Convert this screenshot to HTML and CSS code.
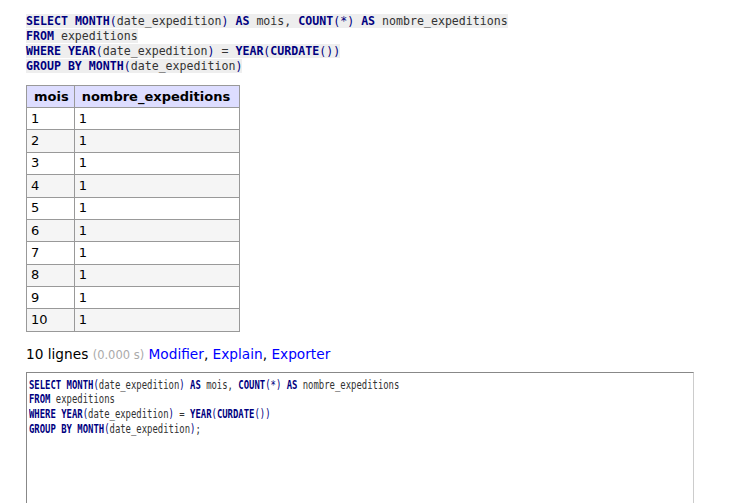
FILE: index.html
```html
<!DOCTYPE html>
<html lang="fr">
<head>
<meta charset="utf-8">
<title>SQL</title>
<link rel="stylesheet" href="styles.css">
</head>
<body>
<div class="content">
  <p class="sql"><code class="code"><b class="kw">SELECT</b> <b class="kw">MONTH</b><span class="op">(</span>date_expedition<span class="op">)</span> <b class="kw">AS</b> mois, <b class="kw">COUNT</b><span class="op">(*)</span> <b class="kw">AS</b> nombre_expeditions<br><b class="kw">FROM</b> expeditions<br><b class="kw">WHERE</b> <b class="kw">YEAR</b><span class="op">(</span>date_expedition<span class="op">)</span> = <b class="kw">YEAR</b><span class="op">(</span><b class="kw">CURDATE</b><span class="op">())</span><br><b class="kw">GROUP BY</b> <b class="kw">MONTH</b><span class="op">(</span>date_expedition<span class="op">)</span></code></p>

  <table class="result">
    <thead>
      <tr><th>mois</th><th>nombre_expeditions</th></tr>
    </thead>
    <tbody>
      <tr><td>1</td><td>1</td></tr>
      <tr><td>2</td><td>1</td></tr>
      <tr><td>3</td><td>1</td></tr>
      <tr><td>4</td><td>1</td></tr>
      <tr><td>5</td><td>1</td></tr>
      <tr><td>6</td><td>1</td></tr>
      <tr><td>7</td><td>1</td></tr>
      <tr><td>8</td><td>1</td></tr>
      <tr><td>9</td><td>1</td></tr>
      <tr><td>10</td><td>1</td></tr>
    </tbody>
  </table>

  <p class="stats">10 lignes <span class="time">(0.000 s)</span> <a href="#">Modifier</a>, <a href="#">Explain</a>, <a href="#">Exporter</a></p>

  <div class="editor"><div class="editor-text"><b class="kw">SELECT</b> <b class="kw">MONTH</b><span class="op">(</span>date_expedition<span class="op">)</span> <b class="kw">AS</b> mois, <b class="kw">COUNT</b><span class="op">(*)</span> <b class="kw">AS</b> nombre_expeditions<br><b class="kw">FROM</b> expeditions<br><b class="kw">WHERE</b> <b class="kw">YEAR</b><span class="op">(</span>date_expedition<span class="op">)</span> = <b class="kw">YEAR</b><span class="op">(</span><b class="kw">CURDATE</b><span class="op">())</span><br><b class="kw">GROUP BY</b> <b class="kw">MONTH</b><span class="op">(</span>date_expedition<span class="op">)</span>;</div></div>
</div>
</body>
</html>
```

FILE: styles.css
```css
html, body {
  margin: 0;
  padding: 0;
  background: #fff;
}

body {
  font-family: "DejaVu Sans", Verdana, sans-serif;
  font-size: 13px;
  color: #000;
}

.content {
  padding: 14px 0 0 26px;
}

.sql {
  margin: 0 0 11px 0;
  font-family: "DejaVu Sans Mono", Consolas, monospace;
  font-size: 11.6px;
  line-height: 15px;
}

.code {
  font-family: "DejaVu Sans Mono", Consolas, monospace;
  font-size: 11.6px;
  line-height: 15px;
  background: #eee;
  color: #333;
}

.kw {
  color: #000080;
  font-weight: bold;
}

.op {
  color: #000080;
}

.result {
  border-collapse: collapse;
  border: 1px solid #999;
  margin: 0;
}

.result th,
.result td {
  border: 1px solid #999;
  padding: 2.7px 4px 2.7px 4px;
  line-height: 16px;
  text-align: left;
  vertical-align: top;
}

.result th {
  background: #ddf;
  font-weight: bold;
  padding: 2.5px 5px 2.5px 7px;
}

.result th:last-child {
  padding-right: 9px;
}

.result tbody tr:nth-child(even) td {
  background: #f5f5f5;
}

.stats {
  margin: 12px 0 0 0;
  font-size: 13.7px;
  line-height: 20px;
}

.time {
  font-size: 11.5px;
  color: #aaa;
}

.stats a {
  color: #00f;
  text-decoration: none;
}

.editor {
  margin-top: 7px;
  width: 662px;
  height: 140px;
  border-style: solid;
  border-width: 1px;
  border-color: #888 #ccc #ccc #888;
  padding: 5px 2px 4px;
  overflow: hidden;
}

.editor-text {
  font-family: "DejaVu Sans Mono", Consolas, monospace;
  font-size: 11.5px;
  line-height: 14.6px;
  color: #333;
  white-space: nowrap;
  transform: scaleX(0.775);
  transform-origin: 0 0;
}
```
